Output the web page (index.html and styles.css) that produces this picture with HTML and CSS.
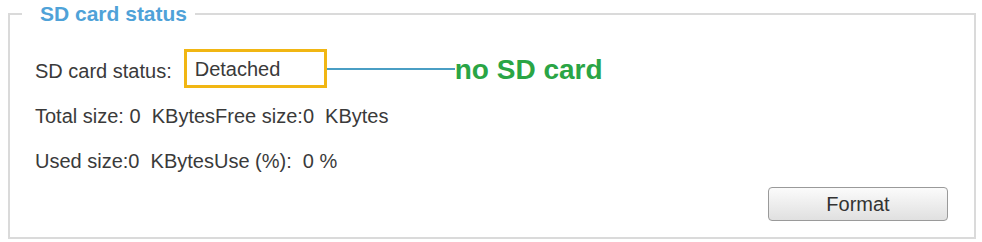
FILE: index.html
```html
<!DOCTYPE html>
<html>
<head>
<meta charset="utf-8">
<link rel="stylesheet" href="styles.css">
</head>
<body>
<fieldset class="panel">
  <legend class="panel-title">SD card status</legend>
  <div class="row row-status">
    <span class="label">SD card status:</span>
    <span class="status-box">Detached</span>
    <span class="connector"></span>
    <span class="note">no SD card</span>
  </div>
  <div class="row row-total">Total size: 0&nbsp; KBytesFree size:0&nbsp; KBytes</div>
  <div class="row row-used">Used size:0&nbsp; KBytesUse (%):&nbsp; 0 %</div>
  <div class="actions">
    <button class="btn" type="button">Format</button>
  </div>
</fieldset>
</body>
</html>
```
FILE: styles.css
```css
html, body {
  margin: 0;
  padding: 0;
  background: #ffffff;
}
body {
  padding-top: 2px;
  font-family: "Liberation Sans", Arial, sans-serif;
  color: #3a3a3a;
}
.panel {
  margin: 0 6px 0 8px;
  border: 2px solid #dadada;
  padding: 0 26px 16px 25px;
  min-width: 0;
}
.panel-title {
  margin-left: -13px;
  padding: 0 8px 0 18px;
  font-size: 21px;
  font-weight: bold;
  line-height: 24px;
  color: #4fa2d8;
}
.row {
  font-size: 20px;
  line-height: 24px;
}
.row-status {
  display: flex;
  align-items: center;
  margin-top: 23px;
  height: 39px;
}
.label {
  padding-top: 4px;
}
.status-box {
  box-sizing: border-box;
  height: 39px;
  width: 143px;
  margin-left: 12px;
  border: 3px solid #f1b613;
  padding: 4px 0 0 8px;
  line-height: 26px;
}
.connector {
  width: 128px;
  height: 2px;
  background: #4a9ec4;
}
.note {
  font-size: 28px;
  font-weight: bold;
  color: #2aa545;
  line-height: 32px;
  padding-top: 2px;
}
.row-total {
  margin-top: 16px;
}
.row-used {
  margin-top: 21px;
}
.actions {
  display: flex;
  justify-content: flex-end;
  margin-top: 14px;
}
.btn {
  box-sizing: border-box;
  width: 180px;
  height: 34px;
  border: 1px solid #9a9a9a;
  border-radius: 4px;
  background: linear-gradient(#fbfbfb, #e0e0e0);
  font-family: "Liberation Sans", Arial, sans-serif;
  font-size: 20px;
  color: #333333;
  padding: 0;
}
```
